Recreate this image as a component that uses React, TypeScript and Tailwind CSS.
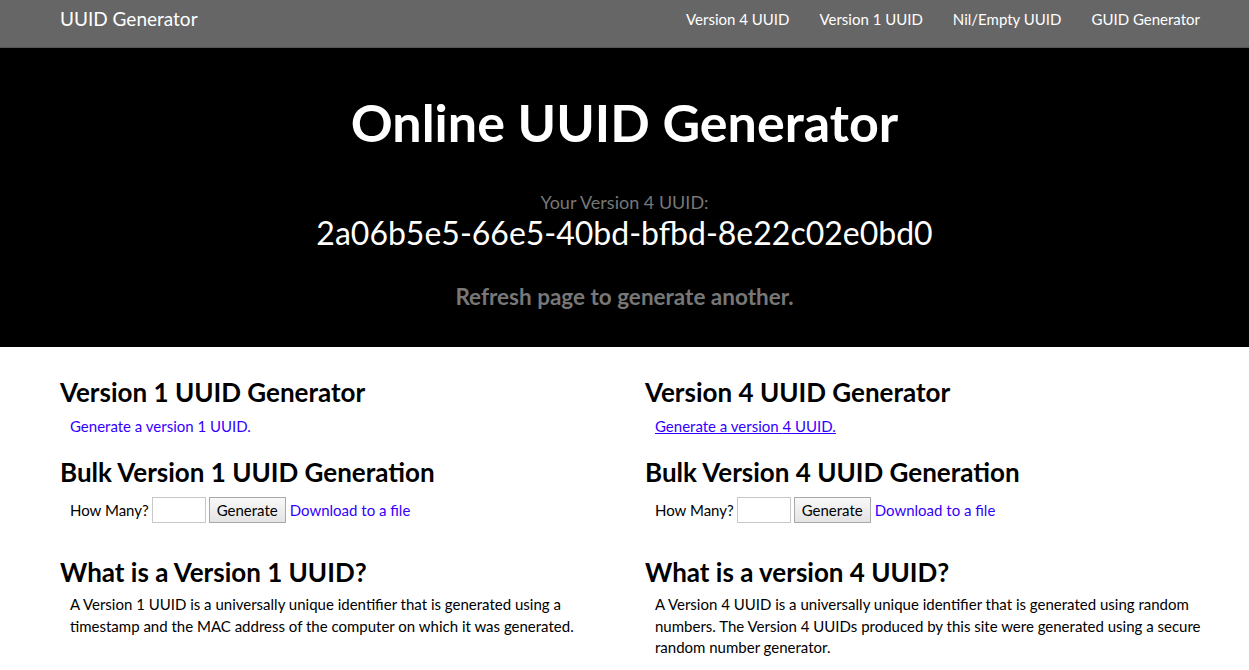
import React from "react";

const navLinks = ["Version 4 UUID", "Version 1 UUID", "Nil/Empty UUID", "GUID Generator"];

function Bulk() {
  return (
    <div className="flex items-center pl-[10px] mt-[9px] text-[15px] text-black">
      <span className="mr-[3px]">How Many?</span>
      <input
        type="text"
        className="w-[54px] h-[26px] border border-[#c8c8c8] bg-white outline-none"
      />
      <button className="ml-[3px] w-[77px] h-[26px] border border-[#a9a9a9] bg-gradient-to-b from-[#f8f8f8] to-[#e4e4e4] text-[15px] text-black">
        Generate
      </button>
      <a href="#" className="ml-[4px] text-[#3300ff]">
        Download to a file
      </a>
    </div>
  );
}

function Column({ v, what, text, underline }: { v: string; what: string; text: string; underline?: boolean }) {
  return (
    <div className="w-[585px] px-[15px]">
      <h2 className="text-[26px] font-bold leading-[32px] mt-[29px]">Version {v} UUID Generator</h2>
      <a
        href="#"
        className={`block mt-[7px] pl-[10px] text-[15px] leading-[22px] text-[#3300ff] ${underline ? "underline" : ""}`}
      >
        Generate a version {v} UUID.
      </a>
      <h2 className="text-[26px] font-bold leading-[32px] mt-[19px]">Bulk Version {v} UUID Generation</h2>
      <Bulk />
      <h2 className="text-[26px] font-bold leading-[32px] mt-[33px]">{what}</h2>
      <p className="pl-[10px] mr-[-12px] mt-[6px] text-[15px] leading-[21.5px] text-black">{text}</p>
    </div>
  );
}

export default function App() {
  return (
    <div className="min-h-screen bg-white font-['Lato','Liberation_Sans',sans-serif] text-black">
      <nav className="h-[48px] bg-[#666666] border-b border-[#555]">
        <div className="w-[1170px] ml-[45px] px-[15px] h-full flex items-center justify-between pb-[8px] text-white">
          <span className="text-[19px]">UUID Generator</span>
          <div className="flex gap-[30px] text-[15px]">
            {navLinks.map((l) => (
              <a key={l} href="#">
                {l}
              </a>
            ))}
          </div>
        </div>
      </nav>
      <section className="h-[299px] bg-black text-center flex flex-col items-center">
        <h1 className="mt-[43px] text-[52px] font-bold leading-[62px] text-white">Online UUID Generator</h1>
        <div className="mt-[38px] text-[18px] leading-[22px] text-[#777777]">Your Version 4 UUID:</div>
        <div className="mt-[1px] text-[32px] leading-[38px] text-white">2a06b5e5-66e5-40bd-bfbd-8e22c02e0bd0</div>
        <div className="mt-[31px] text-[22.5px] font-bold leading-[28px] text-[#777777]">Refresh page to generate another.</div>
      </section>
      <main className="w-[1170px] ml-[45px] flex">
        <Column
          v="1"
          what="What is a Version 1 UUID?"
          text="A Version 1 UUID is a universally unique identifier that is generated using a timestamp and the MAC address of the computer on which it was generated."
        />
        <Column
          v="4"
          underline
          what="What is a version 4 UUID?"
          text="A Version 4 UUID is a universally unique identifier that is generated using random numbers. The Version 4 UUIDs produced by this site were generated using a secure random number generator."
        />
      </main>
    </div>
  );
}
